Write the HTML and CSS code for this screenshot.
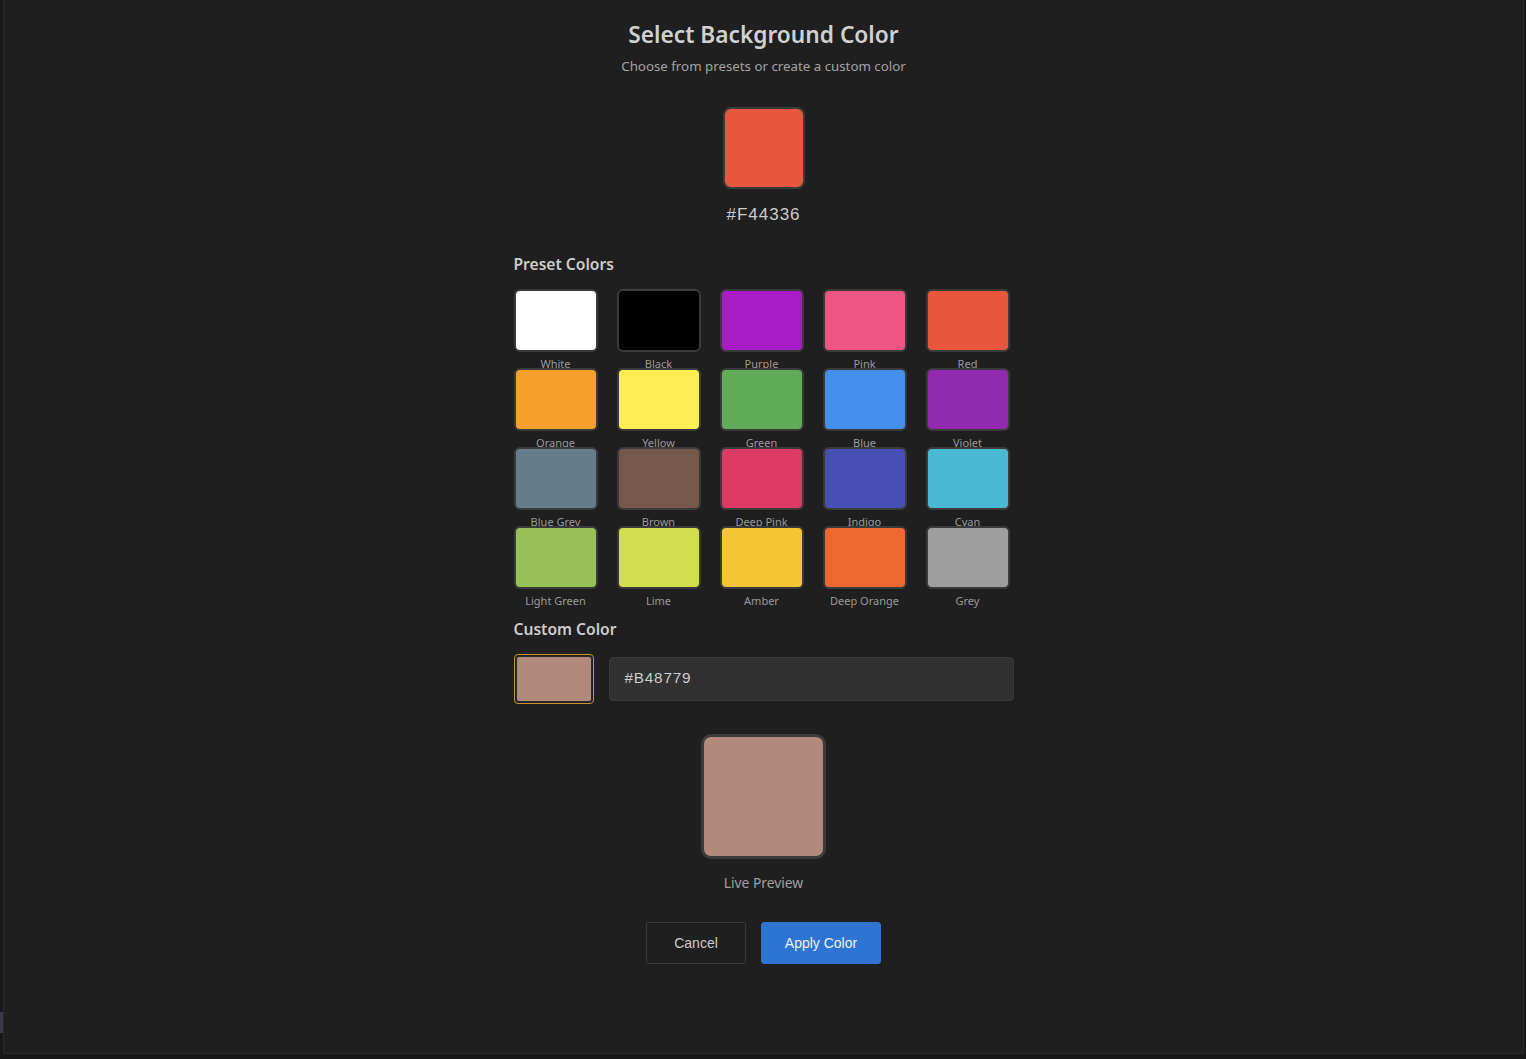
FILE: index.html
```html
<!DOCTYPE html>
<html lang="en">
<head>
<meta charset="utf-8">
<title>Select Background Color</title>
<link rel="stylesheet" href="styles.css">
</head>
<body>
<div class="frame">
  <div class="panel">
    <h1 class="title">Select Background Color</h1>
    <p class="subtitle">Choose from presets or create a custom color</p>

    <div class="current">
      <div class="current-swatch"></div>
      <div class="current-hex">#F44336</div>
    </div>

    <h2 class="section-title">Preset Colors</h2>
    <div class="grid">
      <div class="item"><div class="sw c-white"></div><span class="lbl">White</span></div>
      <div class="item"><div class="sw c-black"></div><span class="lbl">Black</span></div>
      <div class="item"><div class="sw c-purple"></div><span class="lbl">Purple</span></div>
      <div class="item"><div class="sw c-pink"></div><span class="lbl">Pink</span></div>
      <div class="item"><div class="sw c-red"></div><span class="lbl">Red</span></div>
      <div class="item"><div class="sw c-orange"></div><span class="lbl">Orange</span></div>
      <div class="item"><div class="sw c-yellow"></div><span class="lbl">Yellow</span></div>
      <div class="item"><div class="sw c-green"></div><span class="lbl">Green</span></div>
      <div class="item"><div class="sw c-blue"></div><span class="lbl">Blue</span></div>
      <div class="item"><div class="sw c-violet"></div><span class="lbl">Violet</span></div>
      <div class="item"><div class="sw c-bluegrey"></div><span class="lbl">Blue Grey</span></div>
      <div class="item"><div class="sw c-brown"></div><span class="lbl">Brown</span></div>
      <div class="item"><div class="sw c-deeppink"></div><span class="lbl">Deep Pink</span></div>
      <div class="item"><div class="sw c-indigo"></div><span class="lbl">Indigo</span></div>
      <div class="item"><div class="sw c-cyan"></div><span class="lbl">Cyan</span></div>
      <div class="item"><div class="sw c-lightgreen"></div><span class="lbl">Light Green</span></div>
      <div class="item"><div class="sw c-lime"></div><span class="lbl">Lime</span></div>
      <div class="item"><div class="sw c-amber"></div><span class="lbl">Amber</span></div>
      <div class="item"><div class="sw c-deeporange"></div><span class="lbl">Deep Orange</span></div>
      <div class="item"><div class="sw c-grey"></div><span class="lbl">Grey</span></div>
    </div>

    <h2 class="section-title custom-title">Custom Color</h2>
    <div class="custom-row">
      <div class="picker"><div class="picker-fill"></div></div>
      <div class="hex-input">#B48779</div>
    </div>

    <div class="preview">
      <div class="preview-box"></div>
      <div class="preview-label">Live Preview</div>
    </div>

    <div class="actions">
      <button class="btn btn-cancel">Cancel</button>
      <button class="btn btn-apply">Apply Color</button>
    </div>
  </div>
</div>
<div class="thumb"></div>
</body>
</html>
```

FILE: styles.css
```css
html, body {
  margin: 0;
  padding: 0;
  background: #181818;
  height: 100%;
  overflow: hidden;
}

body {
  font-family: "Noto Sans", "Open Sans", sans-serif;
  color: #cccccc;
}

.frame {
  margin-left: 3px;
  width: 1519px;
  height: 1053px;
  background: #1f1f1f;
  border-left: 1px solid #2a2a2a;
  border-right: 1px solid #2a2a2a;
  border-bottom: 1px solid #2a2a2a;
}

.panel {
  width: 500px;
  margin: 0 auto;
  padding-top: 20px;
  display: flex;
  flex-direction: column;
}

.title {
  margin: 0;
  text-align: center;
  font-size: 22.7px;
  line-height: 30px;
  font-weight: 600;
  color: #d0d0d0;
}

.subtitle {
  margin: 6px 0 0;
  text-align: center;
  font-size: 13.3px;
  line-height: 21px;
  color: #a3a3a3;
}

.current {
  margin-top: 30px;
  display: flex;
  flex-direction: column;
  align-items: center;
}

.current-swatch {
  width: 78px;
  height: 78px;
  border: 2px solid #3a3a3a;
  border-radius: 8px;
  background: #e8573c;
}

.current-hex {
  margin-top: 15px;
  font-family: "Liberation Sans", Arial, sans-serif;
  font-size: 17px;
  line-height: 22px;
  letter-spacing: 1px;
  color: #cccccc;
}

.section-title {
  margin: 27px 0 0;
  font-size: 15.6px;
  line-height: 22px;
  font-weight: 600;
  color: #cccccc;
}

.grid {
  margin-top: 14px;
  display: grid;
  grid-template-columns: repeat(5, 84px);
  grid-auto-rows: 79px;
  column-gap: 19px;
  row-gap: 0;
}

.item {
  display: flex;
  flex-direction: column;
  align-items: center;
  height: 79px;
  min-height: 0;
}

.sw {
  width: 80px;
  height: 59px;
  flex: none;
  border: 2px solid #3a3a3a;
  border-radius: 6px;
}

.lbl {
  margin-top: 5px;
  font-size: 11px;
  line-height: 14px;
  color: #9a9a9a;
  white-space: nowrap;
}

.c-white { background: #ffffff; }
.c-black { background: #000000; }
.c-purple { background: #a81cc5; }
.c-pink { background: #ef5584; }
.c-red { background: #e8573c; }
.c-orange { background: #f5a02b; }
.c-yellow { background: #feed55; }
.c-green { background: #60ac58; }
.c-blue { background: #458fed; }
.c-violet { background: #922ab0; }
.c-bluegrey { background: #637d8c; }
.c-brown { background: #76584b; }
.c-deeppink { background: #dd3b66; }
.c-indigo { background: #464fb3; }
.c-cyan { background: #4ab8d3; }
.c-lightgreen { background: #97c257; }
.c-lime { background: #d1de4d; }
.c-amber { background: #f5c633; }
.c-deeporange { background: #ef6730; }
.c-grey { background: #9e9e9e; }

.custom-title {
  margin-top: 13px;
}

.custom-row {
  margin-top: 14px;
  display: flex;
  align-items: center;
  gap: 15px;
}

.picker {
  width: 76px;
  height: 46px;
  padding: 1px;
  border: 1px solid #c99431;
  border-radius: 4px;
  box-sizing: content-box;
  display: flex;
}

.picker-fill {
  flex: 1;
  border: 1px solid #2a2a2a;
  border-radius: 3px;
  background: #b18a7c;
}

.hex-input {
  flex: 1;
  height: 44px;
  box-sizing: border-box;
  border: 1px solid #3a3a3a;
  border-radius: 4px;
  background: #313131;
  padding: 0 15px 3px;
  display: flex;
  align-items: center;
  font-family: "Liberation Sans", Arial, sans-serif;
  font-size: 15.3px;
  letter-spacing: 0.8px;
  color: #cccccc;
}

.preview {
  margin-top: 30px;
  display: flex;
  flex-direction: column;
  align-items: center;
}

.preview-box {
  width: 119px;
  height: 119px;
  border: 3px solid #3b3b3b;
  border-radius: 10px;
  background: #b18a7c;
}

.preview-label {
  margin-top: 14px;
  font-size: 13.8px;
  line-height: 20px;
  color: #a0a0a0;
}

.actions {
  margin-top: 29px;
  display: flex;
  justify-content: center;
  gap: 15px;
}

.btn {
  height: 42px;
  border-radius: 3px;
  font-family: "Liberation Sans", Arial, sans-serif;
  font-size: 14px;
  cursor: pointer;
}

.btn-cancel {
  width: 100px;
  background: transparent;
  border: 1px solid #3a3a3a;
  color: #cccccc;
}

.btn-apply {
  width: 120px;
  background: #2e74d3;
  border: 1px solid #2e74d3;
  color: #f0f0f0;
}

.thumb {
  position: absolute;
  left: 0;
  top: 1012px;
  width: 3px;
  height: 21px;
  background: #3a3a44;
}
```
